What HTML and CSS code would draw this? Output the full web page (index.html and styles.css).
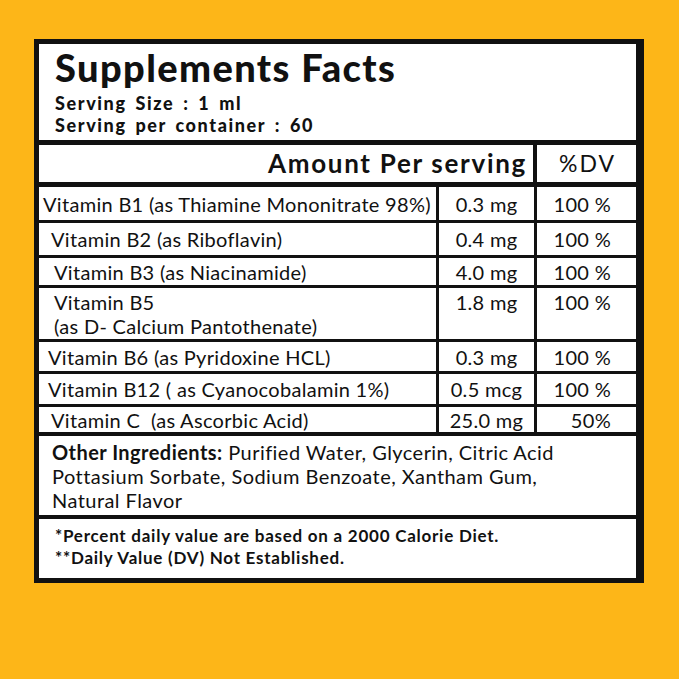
FILE: index.html
```html
<!DOCTYPE html>
<html>
<head>
<meta charset="utf-8">
<link rel="stylesheet" href="styles.css">
</head>
<body>
<div class="label">
  <div class="head">
    <h1 class="title">Supplements Facts</h1>
    <div class="serving">Serving Size : 1 ml</div>
    <div class="serving">Serving per container : 60</div>
  </div>
  <div class="colhead">
    <div class="amt-head">Amount Per serving</div>
    <div class="dv-head">%DV</div>
  </div>
  <div class="rows">
    <div class="cell name in-1">Vitamin B1 (as Thiamine Mononitrate 98%)</div>
    <div class="cell amt">0.3 mg</div>
    <div class="cell dv">100 %</div>

    <div class="cell name in-3">Vitamin B2 (as Riboflavin)</div>
    <div class="cell amt">0.4 mg</div>
    <div class="cell dv">100 %</div>

    <div class="cell name in-4">Vitamin B3 (as Niacinamide)</div>
    <div class="cell amt">4.0 mg</div>
    <div class="cell dv">100 %</div>

    <div class="cell name in-4">Vitamin B5<br>(as D- Calcium Pantothenate)</div>
    <div class="cell amt top">1.8 mg</div>
    <div class="cell dv top">100 %</div>

    <div class="cell name in-2">Vitamin B6 (as Pyridoxine HCL)</div>
    <div class="cell amt">0.3 mg</div>
    <div class="cell dv">100 %</div>

    <div class="cell name in-2">Vitamin B12 ( as Cyanocobalamin 1%)</div>
    <div class="cell amt">0.5 mcg</div>
    <div class="cell dv">100 %</div>

    <div class="cell name in-3">Vitamin C&nbsp; (as Ascorbic Acid)</div>
    <div class="cell amt">25.0 mg</div>
    <div class="cell dv">50%</div>
  </div>
  <div class="other">
    <b>Other Ingredients:</b> Purified Water, Glycerin, Citric Acid<br>
    Pottasium Sorbate, Sodium Benzoate, Xantham Gum,<br>
    Natural Flavor
  </div>
  <div class="foot">
    <div>*Percent daily value are based on a 2000 Calorie Diet.</div>
    <div>**Daily Value (DV) Not Established.</div>
  </div>
</div>
</body>
</html>
```

FILE: styles.css
```css
* { box-sizing: border-box; }

html, body {
  margin: 0;
  background: #fdb618;
}

body {
  padding: 39px 0 0 34px;
  font-family: Lato, "Noto Sans", sans-serif;
  color: #111;
}

.label {
  width: 610px;
  height: 544px;
  background: #fff;
  border-style: solid;
  border-color: #111;
  border-width: 5px 8px 5px 5px;
  display: flex;
  flex-direction: column;
}

.head {
  padding: 5px 16px 4px;
  border-bottom: 5px solid #111;
}

.title {
  margin: 0 0 7px;
  font-size: 38px;
  line-height: 36px;
  font-weight: 900;
  letter-spacing: 1.4px;
}

.serving {
  font-size: 18px;
  line-height: 22px;
  font-weight: 900;
  letter-spacing: 1.6px;
  word-spacing: 3px;
}

.colhead {
  display: grid;
  grid-template-columns: 498px 1fr;
  height: 42px;
  border-bottom: 5px solid #111;
}

.amt-head {
  border-right: 4px solid #111;
  text-align: right;
  padding-right: 6px;
  font-size: 26px;
  font-weight: 700;
  line-height: 37px;
  letter-spacing: 1.7px;
}

.dv-head {
  text-align: center;
  padding-left: 2px;
  font-size: 23px;
  line-height: 37px;
  letter-spacing: 2px;
}

.rows {
  display: grid;
  grid-template-columns: 400px 98px 1fr;
  grid-template-rows: 36px 35px 30px 54px 32px 33px 29px;
  font-size: 20px;
  line-height: 24px;
  letter-spacing: 0.3px;
}

.cell {
  display: flex;
  align-items: center;
  border-bottom: 3px solid #111;
}

.rows > :nth-last-child(-n+3) { border-bottom-width: 4px; }

.name { border-right: 3px solid #111; padding-left: 5px; }
.in-1 { padding-left: 4px; }
.in-2 { padding-left: 9px; }
.in-3 { padding-left: 12px; }
.in-4 { padding-left: 15px; }

.amt {
  border-right: 3px solid #111;
  justify-content: center;
}

.dv {
  justify-content: flex-end;
  padding-right: 25px;
}

.top {
  align-items: flex-start;
  padding-top: 2px;
}

.other {
  padding: 4px 13px 0;
  height: 83px;
  font-size: 20px;
  line-height: 24px;
  letter-spacing: 0.45px;
  border-bottom: 4px solid #111;
}

.other b { font-weight: 700; }

.foot {
  padding: 6px 16px 0;
  font-size: 17px;
  line-height: 22px;
  font-weight: 700;
  letter-spacing: 0.75px;
}
```
